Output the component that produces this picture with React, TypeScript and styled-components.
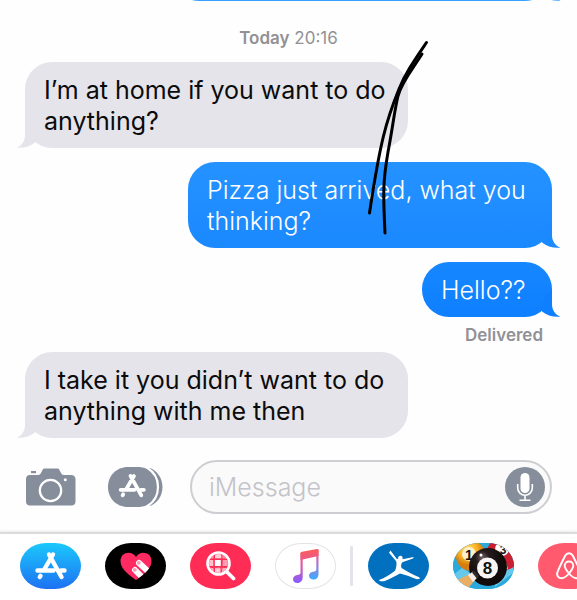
import React from "react";
import styled, { createGlobalStyle, css } from "styled-components";

const GlobalStyle = createGlobalStyle`
  * { box-sizing: border-box; }
  body {
    margin: 0;
    background: #fefefe;
    font-family: Inter, "Liberation Sans", sans-serif;
    overflow-x: hidden;
  }
`;

const Screen = styled.div`
  position: relative;
  min-height: 100vh;
  overflow: hidden;
  display: flex;
  flex-direction: column;
`;

const Thread = styled.main`
  flex: 1;
  display: flex;
  flex-direction: column;
`;

const Peek = styled.div`
  height: 1px;
  overflow: hidden;
  display: flex;
  align-items: flex-end;
  justify-content: flex-end;
  padding-right: 25px;
`;

const DateLine = styled.p`
  margin: 27px 0 14px;
  text-align: center;
  font-size: 17px;
  line-height: 20px;
  color: #919196;
  b { font-weight: 600; }
`;

const Row = styled.div<{ $sent?: boolean }>`
  display: flex;
  justify-content: ${(p) => (p.$sent ? "flex-end" : "flex-start")};
  padding: 0 25px;
  margin-bottom: 14px;
`;

type Tone = "received" | "light" | "mid" | "deep";

const tones: Record<Tone, { fill: string; end: string }> = {
  received: { fill: "#e5e4ea", end: "#e5e4ea" },
  light: { fill: "#35a0ff", end: "#35a0ff" },
  mid: { fill: "linear-gradient(#2492ff, #1b89ff)", end: "#1b89ff" },
  deep: { fill: "linear-gradient(#1787ff, #0e7fff)", end: "#0e7fff" },
};

const BubbleBox = styled.div<{ $tone: Tone; $width?: number }>`
  position: relative;
  flex: 0 1 auto;
  ${(p) => p.$width && css`width: ${p.$width}px;`}
  max-width: 100%;
  min-height: 55px;
  padding: 13px 16px 11px 19px;
  border-radius: 27px;
  background: ${(p) => tones[p.$tone].fill};
  color: ${(p) => (p.$tone === "received" ? "#0b0b0c" : "#fff")};
  font-size: 25px;
  font-weight: ${(p) => (p.$tone === "received" ? 400 : 300)};
  line-height: 31px;
`;

const Tail = styled.svg<{ $left?: boolean }>`
  position: absolute;
  bottom: 0;
  ${(p) => (p.$left ? "left: -9px; transform: scaleX(-1);" : "right: -9px;")}
`;

function Bubble({ tone, width, children }: { tone: Tone; width?: number; children?: React.ReactNode }) {
  return (
    <BubbleBox $tone={tone} $width={width}>
      {children}
      <Tail $left={tone === "received"} width="36" height="27" viewBox="-27 -27 36 27" aria-hidden="true">
        <path d="M-6-22L0-27V-13C0-7 3-2.500 8.500-.3C1 .3-5-1.500-10-5.500L-10-12Z" fill={tones[tone].end} />
      </Tail>
    </BubbleBox>
  );
}

const Receipt = styled.p`
  margin: -6px 34px 7px;
  text-align: right;
  font-size: 17px;
  font-weight: 600;
  line-height: 20px;
  color: #919196;
`;

const Composer = styled.form`
  display: flex;
  align-items: center;
  padding: 0 25px 18px 26px;
  margin-top: 8px;
`;

const IconButton = styled.button`
  flex: none;
  display: flex;
  padding: 0;
  border: 0;
  background: none;
  svg { display: block; }
`;

const Tools = styled.div`
  display: flex;
  align-items: center;
  gap: 32px;
  margin-right: 27px;
`;

const Field = styled.div`
  flex: 1;
  min-width: 0;
  height: 54px;
  display: flex;
  align-items: center;
  border: 2px solid #cdcdd2;
  border-radius: 27px;
  background: #fafafa;
  padding: 0 5px 0 17px;
`;

const TextInput = styled.input`
  flex: 1;
  min-width: 0;
  padding: 0;
  border: 0;
  outline: 0;
  background: none;
  font: inherit;
  font-size: 25px;
  line-height: 31px;
  &::placeholder { color: #c3c3c9; opacity: 1; font-weight: 300; }
`;

const Drawer = styled.nav`
  display: flex;
  gap: 24px;
  padding: 9px 0 11px 20px;
  border-top: 2px solid #dcdcde;
  box-shadow: 0 -1px 2px #e8e8ea;
  background: #fff;
  overflow: hidden;
`;

const AppButton = styled.button<{ $bg: string; $outlined?: boolean }>`
  flex: none;
  width: 61px;
  height: 46px;
  padding: 0;
  display: flex;
  align-items: center;
  justify-content: center;
  overflow: hidden;
  border: ${(p) => (p.$outlined ? "1px solid #e3e3e6" : "0")};
  border-radius: 26px / 23px;
  background: ${(p) => p.$bg};
  svg { display: block; flex: none; }
`;

const Divider = styled.span`
  flex: none;
  width: 3px;
  height: 40px;
  margin: 3px -9px 0 -10px;
  border-radius: 1px;
  background: #e3e3eb;
`;

const Scribble = styled.svg`
  position: absolute;
  left: 0;
  top: 0;
  pointer-events: none;
`;

const StoreMark = () => (
  <g fill="none" strokeLinecap="round">
    <path d="M18 3.500 9.500 18M5.500 24.800 4.800 26M14 3.500 26.500 26M2.500 19.500H18.500M26 19.500H29.500" stroke="currentColor" strokeWidth="4.400" />
  </g>
);

const CameraIcon = () => (
  <svg width="50" height="38" viewBox="0 0 50 38">
    <path d="M5 3h5v2.200H5z" fill="#868e9b" />
    <path d="M4 7h8c2 0 2.500-1 3.500-3l1-2C17.200.7 17.800.5 19 .5h12c1.200 0 1.900.3 2.500 1.500l1 2c1 2 1.500 3 3.500 3h7c2.500 0 4.500 1.500 4.500 4v22.500c0 2.500-1.500 4-4 4H4c-2.500 0-4-1.500-4-4V11c0-2.500 1.500-4 4-4Z" fill="#868e9b" />
    <circle cx="24.500" cy="22.500" r="10.700" fill="none" stroke="#fff" strokeWidth="2.200" />
    <circle cx="39.300" cy="11.700" r="1.500" fill="#fff" />
  </svg>
);

const AppsIcon = () => (
  <svg width="55" height="40" viewBox="0 0 55 40">
    <path d="M41 .7C49 3 54.500 11 54.500 20S49 37 41 39.300C46.500 34.500 49.500 28 49.500 20S46.500 5.500 41 .7Z" fill="#868e9b" />
    <path d="M20 0h10C41 0 50.500 8.500 50.500 20S41 40 30 40H20C8 40 0 31 0 20S8 0 20 0Z" fill="#868e9b" />
    <path d="M39.500 1C46 5 50 12 50 20S46 35 39.500 39" fill="none" stroke="#fff" strokeWidth="2.200" />
    <g transform="translate(10.500 6) scale(.86)" color="#fff"><StoreMark /></g>
  </svg>
);

const MicIcon = () => (
  <svg width="40" height="40" viewBox="0 0 40 40">
    <circle cx="20" cy="20" r="20" fill="#868e9b" />
    <rect x="15.500" y="6" width="9" height="20" rx="4.500" fill="#fff" />
    <path d="M12.700 17v4a7.300 7.300 0 0 0 14.600 0v-4M20 28.500V33M14.500 33.300h11" fill="none" stroke="#fff" strokeWidth="1.600" />
  </svg>
);

const HeartIcon = () => (
  <svg width="32" height="29" viewBox="0 0 32 29">
    <defs>
      <clipPath id="heart"><path d="M16 28C12 25 .5 18 .5 9.200.5 3.500 4.500.8 8.500.8c3.500 0 6 1.700 7.500 4.200C17.500 2.500 20 .8 23.500.8c4 0 8 2.700 8 8.400C31.500 18 20 25 16 28Z" /></clipPath>
    </defs>
    <g clipPath="url(#heart)">
      <path d="M0 0h32v29H0z" fill="#ff2a62" />
      <path d="m19 11 13 12M15 18l12 12" stroke="#fff" strokeWidth="6" strokeLinecap="round" />
      <circle cx="18.800" cy="10.800" r="1.900" fill="#ff9ab4" />
      <circle cx="14.800" cy="17.800" r="1.900" fill="#ff9ab4" />
    </g>
  </svg>
);

const ImageSearchIcon = () => (
  <svg width="30" height="30" viewBox="0 0 30 30">
    <defs><clipPath id="lens"><circle cx="12.500" cy="12.500" r="9.500" /></clipPath></defs>
    <g clipPath="url(#lens)">
      <path d="M2 2h6v6H2zM15 3h6v5h-6z" fill="#ff8fa5" />
      <path d="M9 2h6v6H9z" fill="#ffd0d9" />
      <path d="M2 9h6v6H2z" fill="#ffc0cc" />
      <path d="M8.800 9h6v6h-6z" fill="#fff" />
      <path d="M16 9h7v6h-7z" fill="#ff9cb0" />
      <path d="M3 16h5v5H3zM15 16h6v5h-6z" fill="#ffb0bf" />
      <path d="M9 16h5.500v6H9z" fill="#ffd0d9" />
      <path d="M8.500 2c-1 7-1 14 0 21M15.500 2c1 7 1 14-.5 21M2 8.500c7-1 14-1 21 0M2 16c7 1 14 1 21 0" fill="none" stroke="#ff2d55" strokeWidth="1" />
    </g>
    <circle cx="12.500" cy="12.500" r="11" fill="none" stroke="#fff" strokeWidth="2.600" />
    <path d="m21 21 6.500 6.500" stroke="#fff" strokeWidth="3.800" strokeLinecap="round" />
  </svg>
);

const MusicIcon = () => (
  <svg width="28" height="36" viewBox="0 0 28 36">
    <defs>
      <linearGradient id="noteA" x1="0" y1="0" x2="0" y2="1"><stop stopColor="#fb5c74" /><stop offset=".35" stopColor="#e65b9d" /><stop offset="1" stopColor="#845bff" /></linearGradient>
      <linearGradient id="noteB" x1="0" y1="0" x2="0" y2="1"><stop stopColor="#fb5c5d" /><stop offset=".35" stopColor="#c86bc0" /><stop offset="1" stopColor="#38adff" /></linearGradient>
      <linearGradient id="beam" x1="0" y1="0" x2="0" y2="1"><stop stopColor="#ff5b58" /><stop offset="1" stopColor="#e85b8c" /></linearGradient>
    </defs>
    <path d="M8.500 5h2.200v24c0 3.500-2 6-5.400 6C2.800 35 1 33.500 1 31.200c0-2.200 1.700-3.900 4.200-4.200 2.300-.3 3.300-.6 3.300-2.200Z" fill="url(#noteA)" />
    <path d="M24.300 2h2.200v24c0 3.500-2 5.500-5 5.500-2.600 0-4.500-1.500-4.500-3.800 0-2.200 1.700-3.700 4-4 2.300-.3 3.300-.6 3.300-2.200Z" fill="url(#noteB)" />
    <path d="M8.500 5.500c0-1 .4-1.500 1.500-1.700L25 1c1-.2 1.500.2 1.500 1.200V8L8.500 12Z" fill="url(#beam)" />
  </svg>
);

const DancerIcon = () => (
  <svg width="44" height="34" viewBox="0 0 44 34">
    <path d="M13.500 1.500 12 3.800l7.200 8.400c.8 3.500 0 6.800-1.200 9.600C13 25.500 8 29 2 31l1 1.300h4C13 30 18 27 23 24.500c6 1.500 11 3.500 17 5.800l3-.6-.8-1.500C36 26 30 22 24.500 19c-.8-2.500-.3-4 .8-5.700L36 9.500l.7-1.500-11.200 2.200c.6-2-.4-3.500-2-3.500s-2.500 1.200-2.300 2.800l-1.200.7Z" fill="#fff" />
  </svg>
);

const PoolIcon = () => (
  <svg width="61" height="46" viewBox="0 0 61 46">
    <defs>
      <radialGradient id="ballYellow" cx=".4" cy=".3"><stop stopColor="#ffe08a" /><stop offset=".6" stopColor="#fbb321" /><stop offset="1" stopColor="#d57d10" /></radialGradient>
      <radialGradient id="ballBlack" cx=".35" cy=".25"><stop stopColor="#706060" /><stop offset=".35" stopColor="#261c1c" /><stop offset="1" stopColor="#110b0b" /></radialGradient>
    </defs>
    <path d="M0 0h61v46H0z" fill="#29a9dc" />
    <path d="M0 32 9 25 20 32 6 45M42 44 60 30V20L42 36" fill="#66c9ec" />
    <circle cx="51" cy="10" r="17" fill="#c91f31" />
    <path d="M43 10C48 12 52 18 54 26" fill="none" stroke="#f3cdc9" strokeWidth="2" />
    <circle cx="18" cy="13" r="15" fill="url(#ballYellow)" />
    <circle cx="16" cy="11" r="7" fill="#fff0cc" />
    <text x="16" y="17" fontSize="14" fontWeight="700" textAnchor="middle" fill="#171211">1</text>
    <circle cx="49" cy="6" r="7" fill="#fff" />
    <text x="50" y="11" fontSize="12" fontWeight="700" textAnchor="middle" fill="#171211">3</text>
    <circle cx="35" cy="24" r="19" fill="url(#ballBlack)" />
    <circle cx="34.500" cy="25" r="10.500" fill="#f7f6f5" />
    <text x="34.500" y="31" fontSize="17" fontWeight="700" textAnchor="middle" fill="#111">8</text>
    <circle cx="28" cy="12" r="1.500" fill="#fff" />
    <path d="M4 37 17 31 22 37 13 48H4Z" fill="#e9ad63" />
    <path d="m15 32 5-3.500 4.500 6-4.500 4.500Z" fill="#f6eee4" />
    <path d="m19 29.500 2.500-1.700 4.500 5-2 3Z" fill="#322a2b" />
    <path d="M4 37 0 39v7h12Z" fill="#fff" opacity=".3" />
  </svg>
);

const BeloIcon = () => (
  <svg width="26" height="28" viewBox="0 0 26 28">
    <path d="M13 21.500C10.500 18.500 8.700 16.300 8.700 13.800c0-2.500 1.800-4.300 4.300-4.300s4.300 1.800 4.300 4.300c0 2.500-1.800 4.700-4.300 7.700Zm0 0c-3 3.500-5.300 4.700-7.500 4.700-3 0-4.800-2.400-4.300-5.200C2 18 7 8 9.300 3.500 10.200 1.800 11.300 1.200 13 1.200s2.800.6 3.700 2.300C19 8 24 18 24.800 21c.5 2.800-1.300 5.200-4.300 5.200-2.200 0-4.500-1.200-7.500-4.700Z" fill="none" stroke="#fff" strokeWidth="1.900" />
  </svg>
);

export default function App() {
  return (
    <Screen>
      <GlobalStyle />
      <Thread>
        <Peek aria-hidden="true"><Bubble tone="light" width={380} /></Peek>
        <DateLine><b>Today</b> 20:16</DateLine>
        <Row><Bubble tone="received" width={383}>I’m at home if you want to do anything?</Bubble></Row>
        <Row $sent><Bubble tone="mid" width={364}>Pizza just arrived, what you thinking?</Bubble></Row>
        <Row $sent><Bubble tone="deep" width={130}>Hello??</Bubble></Row>
        <Receipt>Delivered</Receipt>
        <Row><Bubble tone="received" width={383}>I take it you didn’t want to do anything with me then</Bubble></Row>
      </Thread>
      <Composer onSubmit={(e) => e.preventDefault()}>
        <Tools>
          <IconButton type="button" aria-label="Camera"><CameraIcon /></IconButton>
          <IconButton type="button" aria-label="Apps"><AppsIcon /></IconButton>
        </Tools>
        <Field>
          <TextInput aria-label="iMessage" placeholder="iMessage" />
          <IconButton type="button" aria-label="Record audio"><MicIcon /></IconButton>
        </Field>
      </Composer>
      <Drawer aria-label="iMessage apps">
        <AppButton aria-label="App Store" $bg="linear-gradient(#1bc8fc, #1d71f2)">
          <svg width="32" height="30" viewBox="0 0 32 30" color="#fff"><StoreMark /></svg>
        </AppButton>
        <AppButton aria-label="Digital Touch" $bg="#000"><HeartIcon /></AppButton>
        <AppButton aria-label="Images" $bg="#ff2d55"><ImageSearchIcon /></AppButton>
        <AppButton aria-label="Music" $bg="#fff" $outlined><MusicIcon /></AppButton>
        <Divider />
        <AppButton aria-label="Fitness" $bg="#0070bf"><DancerIcon /></AppButton>
        <AppButton aria-label="8 Ball Pool" $bg="#29a9dc"><PoolIcon /></AppButton>
        <AppButton aria-label="Airbnb" $bg="#ff5a6e"><BeloIcon /></AppButton>
      </Drawer>
      <Scribble width="577" height="240" viewBox="0 0 577 240" aria-hidden="true">
        <g fill="none" stroke="#000" strokeWidth="3" strokeLinecap="round">
          <path d="M426.500 42.500C414 61 405 74 399 89C386 121 380 143 369.500 213" />
          <path d="M422 54C412 70 402 81 398 96C394 113 393 126 388 152C383 181 383 192 385 233" />
        </g>
      </Scribble>
    </Screen>
  );
}
